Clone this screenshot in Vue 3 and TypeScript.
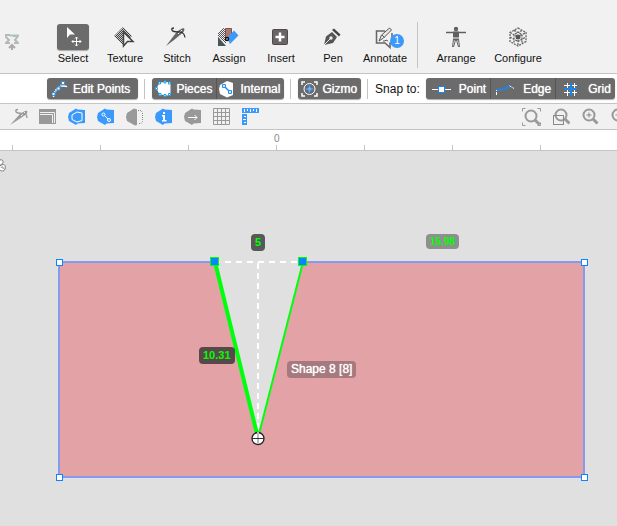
<script setup lang="ts">
interface Tool {
  label: string
  icon: string
  active?: boolean
  badge?: number
}

interface Toggle {
  label: string
  icon: string
}

const tools: Tool[] = [
  { label: 'Select', icon: 'select', active: true },
  { label: 'Texture', icon: 'texture' },
  { label: 'Stitch', icon: 'stitch' },
  { label: 'Assign', icon: 'assign' },
  { label: 'Insert', icon: 'insert' },
  { label: 'Pen', icon: 'pen' },
  { label: 'Annotate', icon: 'annotate', badge: 1 },
]

const sceneTools: Tool[] = [
  { label: 'Arrange', icon: 'arrange' },
  { label: 'Configure', icon: 'configure' },
]

const modeGroups: Toggle[][] = [
  [{ label: 'Edit Points', icon: 'editPoints' }],
  [
    { label: 'Pieces', icon: 'pieces' },
    { label: 'Internal', icon: 'internal' },
  ],
  [{ label: 'Gizmo', icon: 'gizmo' }],
]

const snapOptions: Toggle[] = [
  { label: 'Point', icon: 'snapPoint' },
  { label: 'Edge', icon: 'snapEdge' },
  { label: 'Grid', icon: 'snapGrid' },
]

const viewIcons = ['needle', 'layers', 'outline', 'internalLine', 'mirror', 'info', 'direction', 'grid', 'rulers']
const zoomIcons = ['zoomFit', 'zoomBox', 'zoomIn', 'zoomOut']

const ticks = ['', '', '', '0', '', '', '', '', '', '', '']

const hex = 'M1 5 8 0.500l1.500 1L17 2v13l-7.500.5-1.500 1.500L1 13 0 9Z'
const lens = '<circle cx="8" cy="7" r="5.500" fill="none" stroke="#999" stroke-width="2"/><path d="m12 11 4.500 4.500" stroke="#999" stroke-width="3"/>'

const icons: Record<string, string> = {
  select:
    '<path d="M10 3v11l3-3.500h5Z" fill="#fff"/><path d="M19.500 13v9M15 17.500h9M18 14.500l1.500-1.500 1.500 1.500M18 20.500l1.500 1.500 1.500-1.500M16.500 16 15 17.500l1.500 1.500M22.500 16l1.500 1.500-1.500 1.500" fill="none" stroke="#fff"/>',
  texture:
    '<defs><pattern id="weave" width="2" height="2" patternUnits="userSpaceOnUse"><rect width="2" height="2" fill="#ccc"/><path d="M0 0h1v1H0zM1 1h1v1H1z" fill="#444"/></pattern></defs><path d="m14 3 9 9-9 9-9-9Z" fill="url(#weave)"/><path d="M14.500 8v14l4-4.500h5.500Z" fill="#f1f1f1" stroke="#444" stroke-width="1.500"/>',
  stitch:
    '<path d="M5 22 16 7.500l5-3c3-1 3 1.500 1 4L13 16Z" fill="#696465"/><path d="m17 10 4-4" stroke="#eee"/><path d="M13 4c-3 0-3 3 0 3.500 5 1 10-1 11 6" fill="none" stroke="#333" stroke-width="1.300"/>',
  assign:
    '<defs><pattern id="swatch" width="2" height="2" patternUnits="userSpaceOnUse"><path d="M0 0h1v1H0zM1 1h1v1H1z" fill="#555"/></pattern></defs><path d="m10 4-5 5v4l8 7V5Z" fill="url(#swatch)"/><path d="M12.500 4.500h6V15h-6Z" fill="#a87873" stroke="#7a5551"/><path d="m14 14 7-7.500 4.500 5L17 20Z" fill="#3b99fc"/><path d="M5 13v9h8Z" fill="#4b5557"/><circle cx="14" cy="15" r="1.500" fill="#fff" stroke="#111" stroke-width="1.500"/>',
  insert:
    '<rect x="7.500" y="5.500" width="15" height="15" rx="1" fill="#696465" stroke="#4e494a"/><path d="M15 8.500v9M10.500 13h9" stroke="#fff" stroke-width="2.500"/>',
  pen:
    '<path d="m7 21 2-8.500 6-4.500 5 5-4 6Z" fill="#555"/><path d="m7 21 6-6" stroke="#eee"/><circle cx="14" cy="14" r="1.700" fill="#eee"/><path d="m15 6 2-1.500 6.500 6-1.500 2Z" fill="#444"/>',
  annotate:
    '<path d="M16 7H7.500v12H16l5 4.500V19h2V9" fill="none" stroke="#666" stroke-width="1.500"/><path d="m10 17 2.500-6 8-7 2 2-8 8Z" fill="#e8e8e8" stroke="#555"/><path d="m13 11 2.500 2.500M14 17h2l1-1 2 1" fill="none" stroke="#555"/>',
  arrange:
    '<circle cx="16" cy="5" r="2.200" fill="#606060"/><path d="M6 8.500h20" stroke="#606060" stroke-width="1.500"/><path d="M13 7.500h6v6h-6Z" fill="#606060"/><path d="M13 15.500h6" stroke="#606060" stroke-width="2"/><path d="m13.500 15-1 8M18.500 15l1 8M15.500 16l-2 7M16.500 16l2 7" stroke="#666" fill="none"/>',
  configure:
    '<path d="m16 4 8 4.500v9L16 22l-8-4.500v-9ZM8 8.500l8 4.500 8-4.500M16 13v9M12 6.500l8 4v9M20 6.500l-8 4v9M8 13l8 4.500 8-4.500" fill="none" stroke="#666" stroke-width="1.300" stroke-dasharray="2 1"/><circle cx="16" cy="13" r="2.500" fill="#555"/>',
  editPoints:
    '<path d="M1.500 17c0-4 1-6 4-8.500C8 6 12 5 16 7" fill="none" stroke="#fff" stroke-width="1.500" stroke-dasharray="6 1"/><path d="m2 14 9-12" stroke="#9cc9f5"/><path d="M0 12.500h3v3H0zM5 7h3v3H5zM9.500 1.500h3v3h-3z" fill="#fff" stroke="#2196f3"/>',
  pieces:
    '<path d="m1.500 8.500 3-6 8-.5 3 1v11l-3 1.500-8-1Z" fill="#fff"/><path d="M.5 7.500h2v2h-2zM3.500 2h2v2h-2zM13.500 2h2v2h-2zM13.500 13.500h2v2h-2zM4 13.500h2v2H4zM9 1h2v2H9zM9 14.500h2v2H9z" fill="#fff" stroke="#16a5f5"/>',
  internal:
    '<path d="M1 5 8 1l6 2v12l-6 2.500L1 14 0 9Z" fill="#fff"/><path d="m5 6 6 6" stroke="#2a8cf0" stroke-width="1.500"/><path d="M3.500 4.500h3v3h-3zM9.500 10.500h3v3h-3z" fill="#cfe6ff" stroke="#2a8cf0"/>',
  gizmo:
    '<path d="M1 5V2h3M13 2h3v3M16 13v3h-3M4 16H1v-3" fill="none" stroke="#fff" stroke-width="1.500"/><circle cx="8.500" cy="9" r="5.500" fill="none" stroke="#fff"/><path d="m8.500 5 1 3 3 1-3 1-1 3-1-3-3-1 3-1Z" fill="#6db7ff" stroke="#3b99fc" stroke-width=".5"/>',
  snapPoint:
    '<path d="M0 9.500h19" stroke="#fff"/><rect x="6.500" y="6.500" width="6" height="6" fill="#fff" stroke="#1b86f2"/>',
  snapEdge:
    '<path d="M.5 15v-5M13 5.500l5 3" stroke="#fff" stroke-dasharray="3 1"/><path d="M1 9.500c6 1 9 0 12.500-4" fill="none" stroke="#1b86f2" stroke-width="2"/>',
  snapGrid:
    '<path d="M6.500 3v13M13.500 3v13M3 5.500h13M3 12.500h13" stroke="#fff"/><path d="M10 3v13M3 9h13" stroke="#1b86f2" stroke-width="2"/>',
  needle:
    '<path d="M0 17 10 6l5-3c3-1 3 1.500 1 3.500L7 12.500Z" fill="#999"/><path d="m11 8 4-4" stroke="#f1f1f1"/><path d="M8 1.500c-3 0-3 3 0 3.500 5 1 9-1 9 5" fill="none" stroke="#999" stroke-width="1.300"/>',
  layers:
    '<path d="M0 1h17v15H0Z" fill="#999"/><path d="M1 4.500h14.500V15M1 6.500h12.500V15" fill="none" stroke="#f1f1f1"/>',
  outline: `<path d="${hex}" fill="#3b99fc"/><path d="m4 7 5-3 5 1v7.500l-5 1.500-5-2.500Z" fill="none" stroke="#fff"/>`,
  internalLine: `<path d="${hex}" fill="#3b99fc"/><path d="m7 7 5 5" stroke="#fff"/><circle cx="6.500" cy="6.500" r="1.500" fill="#3b99fc" stroke="#fff"/><circle cx="12" cy="12" r="1.500" fill="#3b99fc" stroke="#fff"/>`,
  mirror:
    '<path d="M1 5 8 .5l3 1V17l-2 .5L1 13 0 9Z" fill="#999"/><path d="M12 2.500h3l1.500 2v9l-1.500 2h-3" fill="none" stroke="#888" stroke-dasharray="1 1"/>',
  info: `<path d="${hex}" fill="#3b99fc"/><path d="M8 4h2v2H8zM7 7h3v5h1.500v1.500H7V12h1V8.500H7Z" fill="#fff"/>`,
  direction: `<path d="${hex}" fill="#999"/><path d="M4 9.500h9M10.500 7l2.500 2.500-2.500 2.500" fill="none" stroke="#fff"/>`,
  grid:
    '<path d="M.5.5h16v16H.5ZM4.500.5v16M8.500.5v16M12.500.5v16M.5 4.500h16M.5 8.500h16M.5 12.500h16" fill="none" stroke="#999"/>',
  rulers:
    '<path d="M0 0h17v5H0zM0 6h5v11H0z" fill="#3b99fc"/><path d="M2.500 1v3M5.500 1v2M8.500 1v3M11.500 1v2M14.500 1v3M2 8.500h2M1 11.500h3M2 14.500h2" stroke="#fff"/>',
  zoomFit: `<g transform="translate(1 1)">${lens}</g><path d="M.5 3.500v-3h3M15.500.5h3v3M18.500 14.500v3h-3M3.500 17.500h-3v-3" fill="none" stroke="#999"/>`,
  zoomBox: `<g transform="translate(2 0)">${lens}</g><rect x="2.500" y="7.500" width="10" height="9" fill="none" stroke="#888"/>`,
  zoomIn: `<g transform="translate(1 0)">${lens}</g><path d="M9 4.500v5M6.500 7h5" stroke="#888"/>`,
  zoomOut: `<g transform="translate(1 0)">${lens}</g><path d="M6.500 7h5" stroke="#888"/>`,
}

const corners = [
  { x: 59, y: 111 },
  { x: 584, y: 111 },
  { x: 59, y: 326 },
  { x: 584, y: 326 },
]
</script>

<template>
  <main class="app">
    <header class="tools">
      <svg class="pull" width="14" height="17" viewBox="0 0 14 17" aria-hidden="true">
        <path d="M0 1h5M0 2l4 4-3 3h4M9 9h4l-3-3 3-4H8" fill="none" stroke="#b8b8b8" stroke-width="2" />
        <path d="M5 1.500h9" stroke="#a9c8b0" stroke-width="2" />
        <path d="M7 16v-5M4 14l3-3 3 3" fill="none" stroke="#aaa" stroke-width="2" />
      </svg>
      <nav class="tool-list">
        <button v-for="t in tools" :key="t.label" type="button" class="tool">
          <span class="tool-icon" :class="{ active: t.active }">
            <svg width="32" height="26" viewBox="0 0 32 26" v-html="icons[t.icon]"></svg>
            <span v-if="t.badge" class="badge">{{ t.badge }}</span>
          </span>
          <span>{{ t.label }}</span>
        </button>
      </nav>
      <span class="tool-divider"></span>
      <nav class="tool-list">
        <button v-for="t in sceneTools" :key="t.label" type="button" class="tool wide">
          <span class="tool-icon">
            <svg width="32" height="26" viewBox="0 0 32 26" v-html="icons[t.icon]"></svg>
          </span>
          <span>{{ t.label }}</span>
        </button>
      </nav>
    </header>

    <section class="modes">
      <template v-for="(group, g) in modeGroups" :key="g">
        <div class="segment">
          <button v-for="b in group" :key="b.label" type="button" class="toggle" :class="{ primary: g === 0 }">
            <svg width="17" height="18" viewBox="0 0 17 18" v-html="icons[b.icon]"></svg>
            <span>{{ b.label }}</span>
          </button>
        </div>
        <span class="mode-divider"></span>
      </template>
      <span class="snap-title">Snap to:</span>
      <div class="segment">
        <button v-for="b in snapOptions" :key="b.label" type="button" class="toggle snap">
          <svg width="19" height="18" viewBox="0 0 19 18" v-html="icons[b.icon]"></svg>
          <span>{{ b.label }}</span>
        </button>
      </div>
    </section>

    <section class="views">
      <div class="icon-row">
        <button v-for="i in viewIcons" :key="i" type="button" class="icon-button" :aria-label="i">
          <svg width="18" height="18" viewBox="0 0 18 18" v-html="icons[i]"></svg>
        </button>
      </div>
      <div class="icon-row zooms">
        <button v-for="i in zoomIcons" :key="i" type="button" class="icon-button" :aria-label="i">
          <svg width="19" height="18" viewBox="0 0 19 18" v-html="icons[i]"></svg>
        </button>
      </div>
    </section>

    <div class="ruler">
      <span v-for="(t, n) in ticks" :key="n" class="tick"><span class="tick-label">{{ t }}</span></span>
    </div>

    <section class="canvas">
      <svg class="drawing" aria-hidden="true">
        <path d="M0 9c3-1 4 2 2 4-1 1-2 1-2 1M0 15c4-3 6-1 5 3-1 3-4 2-5 1M1 17c1-2 3-1 2 1" fill="#fff" stroke="#777" />
        <path d="M59 111H215L258 287 303 111H584V326H59Z" fill="#e2a2a6" />
        <path d="M214 111H59V326H584V111H303" fill="none" stroke="#8799ea" stroke-width="2" />
        <path d="M215 111H303" stroke="#fff" stroke-width="2" stroke-dasharray="6 5" stroke-dashoffset="1" />
        <path d="M258 112V284" stroke="#fff" stroke-width="2" stroke-dasharray="6 4" />
        <path d="M303 111 258 287" stroke="#00ff0c" stroke-width="2" />
        <path d="M215 111 258 287" stroke="#00ff0c" stroke-width="4" />
        <rect x="210.500" y="106.500" width="8" height="8" fill="#0a84ff" stroke="#00ff0c" />
        <rect x="298.500" y="106.500" width="8" height="8" fill="#0a84ff" stroke="#00ff0c" />
        <rect
          v-for="c in corners"
          :key="`${c.x}-${c.y}`"
          :x="c.x - 2.5"
          :y="c.y - 2.5"
          width="6"
          height="6"
          class="corner"
        />
        <circle cx="258" cy="287.500" r="6" fill="#fff" stroke="#222" stroke-width="1.300" />
        <path d="M258 281v12" stroke="#bbb" stroke-width="2" />
        <path d="M252 287.500h12" stroke="#333" />
      </svg>
      <span class="tag measure width-tag">5</span>
      <span class="tag measure side-tag">10.31</span>
      <span class="tag measure faint-tag">15.98</span>
      <span class="tag name-tag">Shape 8 [8]</span>
    </section>
  </main>
</template>

<style>
body {
  margin: 0;
}
</style>

<style scoped>
.app {
  display: flex;
  flex-direction: column;
  min-height: 100vh;
  overflow: hidden;
  background: #fff;
  color: #111;
  font-family: "Liberation Sans", Arial, sans-serif;
  font-size: 12px;
}

button {
  margin: 0;
  padding: 0;
  border: 0;
  background: none;
  color: inherit;
  font: inherit;
}

svg {
  display: block;
  flex: none;
}

.tools {
  display: flex;
  box-sizing: border-box;
  height: 74px;
  padding: 24px 0 8px 5px;
  background: #f1f1f1;
  border-bottom: 1px solid #c4c4c4;
}

.pull {
  margin: 10px 28px 0 0;
}

.tool-list {
  display: flex;
}

.tool {
  display: flex;
  flex-direction: column;
  align-items: center;
  gap: 2px;
  width: 52px;
  height: 40px;
  font-size: 11px;
  line-height: 12px;
}

.tool.wide {
  width: 62px;
}

.tool-icon {
  position: relative;
  border-radius: 3px;
}

.tool-icon.active {
  background: #6b6b6b;
  box-shadow: 0 1px 1px #aaa;
}

.badge {
  position: absolute;
  top: 10px;
  right: -3px;
  width: 14px;
  height: 14px;
  border-radius: 50%;
  background: #3b99fc;
  color: #fff;
  font-size: 10px;
  line-height: 14px;
  text-align: center;
}

.tool-divider {
  width: 1px;
  height: 46px;
  margin: -2px 7px 0 6px;
  background: #c4c4c4;
}

.modes {
  display: flex;
  align-items: center;
  box-sizing: border-box;
  height: 30px;
  padding-left: 47px;
  border-bottom: 1px solid #c4c4c4;
  white-space: nowrap;
}

.segment {
  display: flex;
  flex: none;
  overflow: hidden;
  border-radius: 3px;
  background: #6b6b6b;
  box-shadow: 0 1px 1px #aaa;
}

.toggle {
  display: flex;
  align-items: center;
  gap: 4px;
  height: 21px;
  padding: 0 4px 0 3px;
  color: #fff;
  font-size: 12px;
  text-shadow: 0 0 1px #fff;
}

.toggle.primary {
  padding: 0 8px 0 5px;
}

.toggle + .toggle {
  box-shadow: inset 1px 0 #555;
}

.toggle.snap {
  gap: 8px;
  padding: 0 4px 0 6px;
}

.mode-divider {
  flex: none;
  width: 1px;
  height: 20px;
  margin: 0 7px 0 6px;
  background: #c4c4c4;
}

.snap-title {
  margin-right: 6px;
}

.views {
  display: flex;
  align-items: center;
  justify-content: space-between;
  box-sizing: border-box;
  height: 26px;
  padding-left: 10px;
  background: #f1f1f1;
  border-bottom: 1px solid #c4c4c4;
}

.icon-row {
  display: flex;
  gap: 11px;
}

.icon-row.zooms {
  gap: 10px;
  margin-right: -11px;
}

.ruler {
  display: flex;
  align-items: flex-end;
  box-sizing: border-box;
  height: 21px;
  padding-left: 12px;
  overflow: hidden;
  border-bottom: 1px solid #c4c4c4;
}

.tick {
  position: relative;
  box-sizing: border-box;
  flex: none;
  width: 88px;
  height: 5px;
  border-left: 1px solid #c4c4c4;
}

.tick-label {
  position: absolute;
  bottom: 5px;
  left: -3px;
  color: #888;
  font-size: 10px;
  line-height: 12px;
}

.canvas {
  position: relative;
  flex: 1;
  min-height: 360px;
  background: #e0e0e0;
}

.drawing {
  position: absolute;
  width: 100%;
  height: 100%;
}

.corner {
  fill: #fff;
  stroke: #0a84ff;
}

.tag {
  position: absolute;
  padding: 0 4px;
  border-radius: 4px;
  line-height: 17px;
  white-space: nowrap;
}

.measure {
  background: rgb(40 40 40 / 74%);
  color: #0f0;
  font-size: 11px;
  font-weight: bold;
}

.width-tag {
  top: 83px;
  left: 251px;
}

.side-tag {
  top: 196px;
  left: 199px;
}

.faint-tag {
  top: 83px;
  left: 426px;
  background: #8f8f8f;
  font-size: 10px;
  line-height: 15px;
}

.name-tag {
  top: 210px;
  left: 287px;
  background: rgb(90 70 75 / 45%);
  color: #fff;
  text-shadow: 0 0 1px #fff;
}
</style>
